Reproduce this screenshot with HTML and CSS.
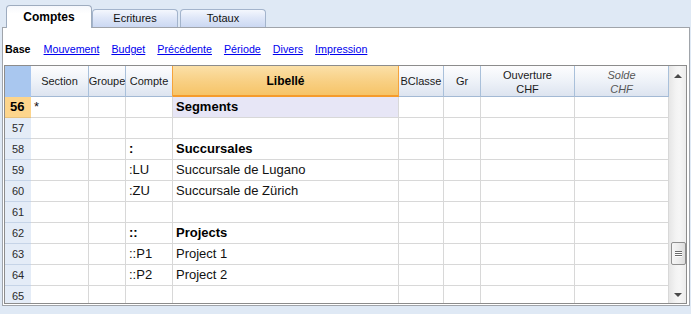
FILE: index.html
```html
<!doctype html>
<html>
<head>
<meta charset="UTF-8">
<title>Comptes</title>
<link rel="stylesheet" href="styles.css">
</head>
<body>
<div class="tabs">
  <div class="tab active">Comptes</div>
  <div class="tab">Ecritures</div>
  <div class="tab">Totaux</div>
</div>

<div class="panel">
  <div class="views">
    <span class="current">Base</span>
    <a href="#">Mouvement</a>
    <a href="#">Budget</a>
    <a href="#">Précédente</a>
    <a href="#">Période</a>
    <a href="#">Divers</a>
    <a href="#">Impression</a>
  </div>

  <div class="table">
    <div class="sheet">
      <!-- header -->
      <div class="hd corner"></div>
      <div class="hd">Section</div>
      <div class="hd">Groupe</div>
      <div class="hd presel">Compte</div>
      <div class="hd sel">Libellé</div>
      <div class="hd">BClasse</div>
      <div class="hd">Gr</div>
      <div class="hd two">Ouverture<br>CHF</div>
      <div class="hd two muted">Solde<br>CHF</div>

      <div class="rh cur">56</div><div class="c">*</div><div class="c"></div><div class="c"></div><div class="c seg b">Segments</div><div class="c"></div><div class="c"></div><div class="c"></div><div class="c"></div>
      <div class="rh">57</div><div class="c"></div><div class="c"></div><div class="c"></div><div class="c"></div><div class="c"></div><div class="c"></div><div class="c"></div><div class="c"></div>
      <div class="rh">58</div><div class="c"></div><div class="c"></div><div class="c b">:</div><div class="c b">Succursales</div><div class="c"></div><div class="c"></div><div class="c"></div><div class="c"></div>
      <div class="rh">59</div><div class="c"></div><div class="c"></div><div class="c">:LU</div><div class="c">Succursale de Lugano</div><div class="c"></div><div class="c"></div><div class="c"></div><div class="c"></div>
      <div class="rh">60</div><div class="c"></div><div class="c"></div><div class="c">:ZU</div><div class="c">Succursale de Zürich</div><div class="c"></div><div class="c"></div><div class="c"></div><div class="c"></div>
      <div class="rh">61</div><div class="c"></div><div class="c"></div><div class="c"></div><div class="c"></div><div class="c"></div><div class="c"></div><div class="c"></div><div class="c"></div>
      <div class="rh">62</div><div class="c"></div><div class="c"></div><div class="c b">::</div><div class="c b">Projects</div><div class="c"></div><div class="c"></div><div class="c"></div><div class="c"></div>
      <div class="rh">63</div><div class="c"></div><div class="c"></div><div class="c">::P1</div><div class="c">Project 1</div><div class="c"></div><div class="c"></div><div class="c"></div><div class="c"></div>
      <div class="rh">64</div><div class="c"></div><div class="c"></div><div class="c">::P2</div><div class="c">Project 2</div><div class="c"></div><div class="c"></div><div class="c"></div><div class="c"></div>
      <div class="rh">65</div><div class="c"></div><div class="c"></div><div class="c"></div><div class="c"></div><div class="c"></div><div class="c"></div><div class="c"></div><div class="c"></div>
    </div>

    <div class="vscroll">
      <div class="arrow up"></div>
      <div class="track">
        <div class="thumb"><span></span><span></span><span></span></div>
      </div>
      <div class="arrow down"></div>
    </div>
  </div>
</div>
</body>
</html>
```

FILE: styles.css
```css
* { box-sizing: border-box; }
body { margin: 0; background: #dfe9f5; font-family: "Liberation Sans", Arial, sans-serif; font-size: 11px; color: #000; height: 314px; overflow: hidden; }

/* tabs */
.tabs { display: flex; align-items: flex-end; height: 27px; padding-left: 6px; position: relative; z-index: 2; }
.tab { width: 86px; height: 18px; margin-right: 1px; border: 1px solid #a3b4cc; border-bottom: none; border-radius: 4px 4px 0 0; background: linear-gradient(to bottom, #f4f7fd 0%, #dfe7f8 45%, #cbd8f2 100%); text-align: center; line-height: 17px; font-size: 11px; color: #111; }
.tab + .tab + .tab { margin-left: 1px; }
.tab.active { width: 86px; height: 23px; margin-bottom: -1px; margin-right: 0; border-color: #9eacbf; background: linear-gradient(to bottom, #f6f8fc 0%, #ffffff 35%, #ffffff 100%); font-weight: bold; font-size: 12px; line-height: 22px; color: #000; }

/* panel */
.panel { margin-left: 2px; width: 688px; height: 279px; border: 1px solid #a0a4aa; background: #fff; padding: 0 2px 1px 1px; display: flex; flex-direction: column; }
.views { display: flex; gap: 12px; height: 37px; padding: 14px 0 0 1px; line-height: 14px; font-size: 10.7px; }
.views .current { font-weight: bold; margin-right: 1px; }
.views a { color: #0000ee; text-decoration: underline; }

/* grid */
.table { display: flex; border: 1px solid #8c8c8c; height: 239px; }
.sheet { display: grid; grid-template-columns: 26px 58px 37px 47px 226px 45px 37px 94px 94px; grid-template-rows: 31px; grid-auto-rows: 21px; height: 237px; overflow: hidden; }

.hd { background: linear-gradient(to bottom, #fdfdfe 0%, #eef2f8 50%, #dde4f0 100%); border-right: 1px solid #a9c0da; border-bottom: 1px solid #a3b9d4; display: flex; align-items: center; justify-content: center; text-align: center; font-size: 11px; line-height: 14px; color: #1a1a1a; white-space: nowrap; overflow: hidden; }
.hd.corner { background: #a9c7ef; border-right: none; border-bottom-color: #a9c7ef; }
.hd.presel { border-right-color: #f5a33c; }
.hd.sel { background: linear-gradient(to bottom, #fbe0a8 0%, #f8cf82 55%, #f6c468 100%); border-right-color: #f5a33c; border-bottom: 2px solid #f59b2b; font-weight: bold; font-size: 12px; color: #000; }
.hd.two { flex-direction: column; padding-top: 1px; }
.hd.muted { font-style: italic; color: #555; }

.rh { background: #e4ecf7; border-bottom: 1px solid #c6d4e7; padding-left: 7px; line-height: 20px; font-size: 11px; color: #2a2a2a; }
.rh.cur { background: #fdd58c; border-bottom-color: #e8c27e; font-weight: bold; font-size: 13px; color: #000; padding-left: 5px; }

.c { border-right: 1px solid #d8d8d8; border-bottom: 1px solid #d8d8d8; padding-left: 3px; line-height: 20px; font-size: 13px; white-space: nowrap; overflow: hidden; color: #111; }
.c.b { font-weight: bold; color: #000; }
.c.seg { background: #e7e6f6; }

/* scrollbar */
.vscroll { width: 17px; display: flex; flex-direction: column; background: linear-gradient(to right, #e6e6e6 0%, #f3f3f3 40%, #f6f6f6 60%, #ececec 100%); }
.arrow { height: 17px; display: flex; align-items: center; justify-content: center; }
.arrow::before { content: ""; border-left: 4px solid transparent; border-right: 4px solid transparent; }
.arrow.up { padding-top: 2px; }
.arrow.up::before { border-bottom: 4px solid #4a4a4a; }
.arrow.down::before { border-top: 4px solid #4a4a4a; }
.track { flex: 1; padding: 159px 0 0 2px; }
.thumb { width: 15px; height: 23px; border: 1px solid #8f8f8f; border-radius: 2px; background: linear-gradient(to right, #f6f6f6 0%, #ececec 50%, #dcdcdc 100%); display: flex; flex-direction: column; justify-content: center; align-items: center; gap: 1px; }
.thumb span { width: 7px; height: 1px; background: #6a6a6a; box-shadow: 0 1px 0 #fff; }
```
